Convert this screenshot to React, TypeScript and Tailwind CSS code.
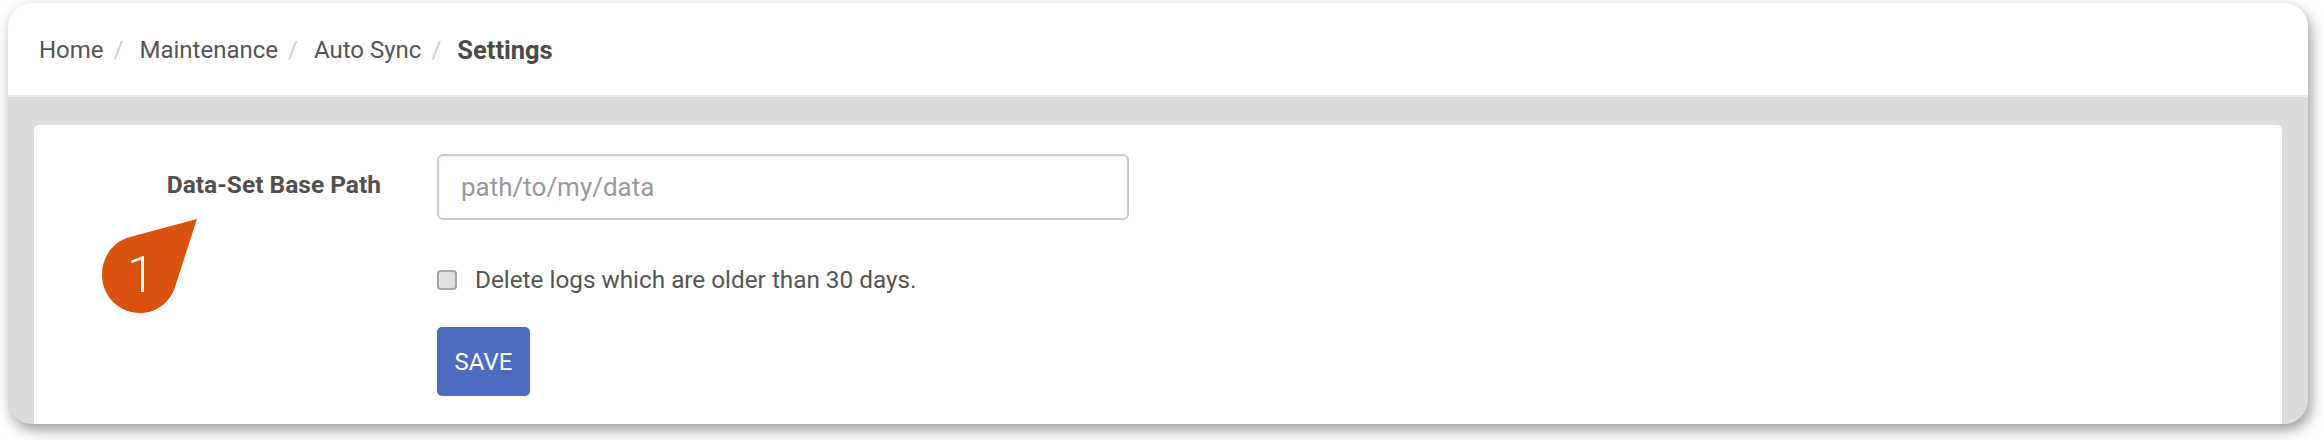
import React from "react";

const crumbs = ["Home", "Maintenance", "Auto Sync"];

export default function App() {
  return (
    <div className="h-[444px] w-[2324px] bg-white pl-[8px] pr-[16px] pt-[3px] font-['Roboto',sans-serif]">
      <div className="flex h-[421px] w-[2300px] flex-col overflow-hidden rounded-[24px] bg-[#dcdcdc] shadow-[3px_6px_14px_rgba(0,0,0,0.4)]">
        <div className="flex h-[94px] shrink-0 items-center border-b-[2px] border-[#ececec] bg-white pl-[31px] pt-[2px] text-[24px] leading-[30px] text-[#555555]">
          {crumbs.map((c) => (
            <React.Fragment key={c}>
              <span>{c}</span>
              <span className="ml-[10px] mr-[16px] text-[#cfcfcf]">/</span>
            </React.Fragment>
          ))}
          <span className="text-[25.5px] font-bold text-[#4a4a4a]">Settings</span>
        </div>

        <div className="relative ml-[26px] mr-[26px] mt-[28px] flex flex-1 rounded-t-[5px] bg-white">
          <div className="w-[347px] shrink-0 pt-[46px] text-right text-[24.5px] font-bold leading-[28px] text-[#505050]">
            Data-Set Base Path
          </div>
          <div className="ml-[56px] flex flex-col pt-[29px]">
            <input
              className="h-[66px] w-[692px] rounded-[6px] border-[2px] border-[#cccccc] bg-white px-[22px] text-[26px] text-[#4a4a4a] shadow-[inset_0_1px_2px_rgba(0,0,0,0.07)] outline-none placeholder:text-[#999999]"
              placeholder="path/to/my/data"
            />
            <label className="mt-[45px] flex items-center text-[24.3px] leading-[30px] text-[#555555]">
              <span className="h-[20px] w-[20px] rounded-[4px] border-[2px] border-[#a9a9a9] bg-[#e0e0e0]" />
              <span className="ml-[18px]">Delete logs which are older than 30 days.</span>
            </label>
            <button className="mt-[32px] h-[69px] w-[93px] rounded-[5px] bg-[#4c6cc0] text-[24px] text-white">
              SAVE
            </button>
          </div>

          <div className="absolute left-[68px] top-[91px] h-[100px] w-[100px]">
            <svg width="100" height="100" viewBox="0 0 100 100" className="absolute left-0 top-0">
              <path
                d="M95 3 L28 21 C12 25 0 40 0 59 C0 80 17 97 38 97 C54 97 68 87 73 71 Z"
                fill="#d9530f"
              />
            </svg>
            <span className="absolute left-[25px] top-[29px] text-[50px] font-light leading-[60px] text-white">
              1
            </span>
          </div>
        </div>
      </div>
    </div>
  );
}
